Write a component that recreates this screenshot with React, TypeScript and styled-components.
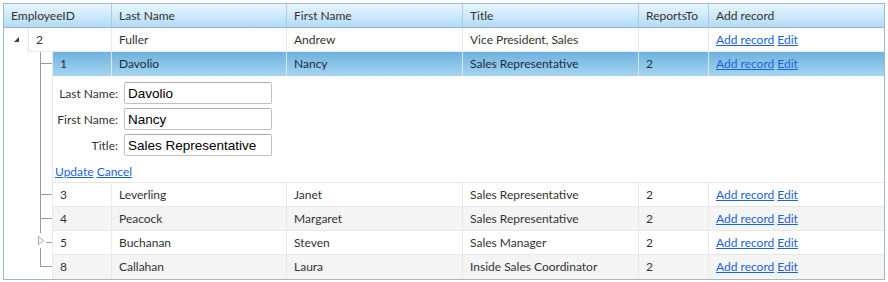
import styled, { createGlobalStyle } from "styled-components";

const GlobalStyle = createGlobalStyle`
    body {
        margin: 0;
        padding: 3px;
        background: #fff;
        font-family: Lato, "Noto Sans", sans-serif;
    }
`;

const COLS = [108, 175, 176, 176, 70, 175];
const INDENT = 24;

const Grid = styled.div`
    width: 880px;
    border: 1px solid #a0b8cc;
    font-size: 12px;
    color: #333;
`;

const HeaderRow = styled.div`
    display: flex;
    height: 24px;
    box-sizing: border-box;
    border-bottom: 1px solid #8fb4d4;
    background: linear-gradient(#e6f5fe, #cfe9fa 50%, #b1dbf5);
`;

const HeaderCell = styled.div<{ $w: number; $last?: boolean }>`
    flex: none;
    width: ${p => p.$w}px;
    box-sizing: border-box;
    padding-left: 7px;
    line-height: 23px;
    white-space: nowrap;
    border-right: ${p => (p.$last ? "none" : "1px solid #a9cde8")};
`;

const Row = styled.div`
    display: flex;
    height: 24px;
    &:last-child > div {
        border-bottom-color: transparent;
    }
`;

const Cell = styled.div<{ $w: number; $first?: boolean; $last?: boolean; $alt?: boolean; $selected?: boolean }>`
    flex: none;
    width: ${p => p.$w}px;
    box-sizing: border-box;
    padding-left: 7px;
    line-height: 23px;
    white-space: nowrap;
    overflow: hidden;
    border-bottom: 1px solid ${p => (p.$selected ? "transparent" : "#e8e8e8")};
    border-right: ${p => (p.$last ? "none" : `1px solid ${p.$selected ? "#d2eaf8" : "#e8e8e8"}`)};
    border-left: ${p => (p.$first ? "1px solid #e8e8e8" : "none")};
    background: ${p =>
        p.$selected
            ? "linear-gradient(#6db2dd, #a6d5f2)"
            : p.$alt
            ? "#f4f4f4"
            : "#fff"};
    background-origin: border-box;
    color: ${p => (p.$selected ? "#1e2c3a" : "#333")};
`;

const ToggleCell = styled.div`
    flex: none;
    width: ${INDENT}px;
    display: flex;
    align-items: center;
    justify-content: center;
    padding-bottom: 1px;
    box-sizing: border-box;
`;

const Spacer = styled.div`
    flex: none;
    width: ${INDENT}px;
`;

type LineKind = "tee" | "elbow" | "pipe";

const Connector = styled.div<{ $kind: LineKind }>`
    position: relative;
    flex: none;
    width: ${INDENT}px;
    &::before {
        content: "";
        position: absolute;
        left: 12px;
        top: 0;
        width: 1px;
        height: ${p => (p.$kind === "elbow" ? "12px" : "100%")};
        background: #9a9a9a;
    }
    &::after {
        content: "";
        display: ${p => (p.$kind === "pipe" ? "none" : "block")};
        position: absolute;
        left: 12px;
        right: 0;
        top: 11px;
        height: 1px;
        background: #9a9a9a;
    }
`;

const CollapsedToggle = styled.div`
    position: absolute;
    z-index: 1;
    left: 7px;
    top: 2px;
    width: 11px;
    height: 15px;
    background: #fff;
    display: flex;
    align-items: center;
    justify-content: center;
`;

const Link = styled.a`
    color: #1a63d3;
    text-decoration: underline;
    cursor: pointer;
`;

const FormRow = styled.div`
    display: flex;
`;

const FormPanel = styled.div`
    flex: none;
    width: ${880 - INDENT * 2}px;
    box-sizing: border-box;
    border-left: 1px solid #e8e8e8;
    border-bottom: 1px solid #e8e8e8;
    padding: 6px 0 2px 0;
`;

const FieldGrid = styled.div`
    display: grid;
    grid-template-columns: 65px 148px;
    column-gap: 6px;
    row-gap: 4px;
    align-items: center;
`;

const FieldLabel = styled.label`
    text-align: right;
    white-space: nowrap;
    color: #333;
`;

const FieldInput = styled.input`
    box-sizing: border-box;
    width: 148px;
    height: 22px;
    margin: 0;
    padding: 0 3px;
    border: 1px solid #c0c2c6;
    border-top-color: #abadb3;
    border-radius: 2px;
    font-family: "Liberation Sans", Arial, sans-serif;
    font-size: 13.5px;
    color: #000;
    outline: none;
`;

const FormActions = styled.div`
    margin-top: 8px;
    padding-left: 2px;
    line-height: 16px;
`;

type Employee = {
    id: number;
    last: string;
    first: string;
    title: string;
    reportsTo?: number;
};

const root: Employee = { id: 2, last: "Fuller", first: "Andrew", title: "Vice President, Sales" };

const children: Employee[] = [
    { id: 1, last: "Davolio", first: "Nancy", title: "Sales Representative", reportsTo: 2 },
    { id: 3, last: "Leverling", first: "Janet", title: "Sales Representative", reportsTo: 2 },
    { id: 4, last: "Peacock", first: "Margaret", title: "Sales Representative", reportsTo: 2 },
    { id: 5, last: "Buchanan", first: "Steven", title: "Sales Manager", reportsTo: 2 },
    { id: 8, last: "Callahan", first: "Laura", title: "Inside Sales Coordinator", reportsTo: 2 },
];

const headers = ["EmployeeID", "Last Name", "First Name", "Title", "ReportsTo", "Add record"];

function ExpandedIcon() {
    return (
        <svg width="5" height="5" viewBox="0 0 5 5">
            <path d="M5 0 L5 5 L0 5 Z" fill="#3a3a3a" />
        </svg>
    );
}

function CollapsedIcon() {
    return (
        <svg width="6" height="9" viewBox="0 0 6 9">
            <path d="M0.5 0.5 L5.5 4.5 L0.5 8.5 Z" fill="none" stroke="#a8a8a8" />
        </svg>
    );
}

function DataCells({ emp, depth, alt, selected }: { emp: Employee; depth: number; alt?: boolean; selected?: boolean }) {
    const values = [emp.id, emp.last, emp.first, emp.title, emp.reportsTo ?? ""];
    return (
        <>
            {values.map((v, i) => (
                <Cell
                    key={i}
                    $w={i === 0 ? COLS[0] - depth * INDENT : COLS[i]}
                    $first={i === 0}
                    $alt={alt}
                    $selected={selected}
                >
                    {v}
                </Cell>
            ))}
            <Cell $w={COLS[5]} $last $alt={alt} $selected={selected}>
                <Link>Add record</Link> <Link>Edit</Link>
            </Cell>
        </>
    );
}

function App() {
    return (
        <>
            <GlobalStyle />
            <Grid>
                <HeaderRow>
                    {headers.map((h, i) => (
                        <HeaderCell key={h} $w={COLS[i]} $last={i === headers.length - 1}>
                            {h}
                        </HeaderCell>
                    ))}
                </HeaderRow>
                <Row>
                    <ToggleCell>
                        <ExpandedIcon />
                    </ToggleCell>
                    <DataCells emp={root} depth={1} />
                </Row>
                {children.map((emp, idx) => {
                    const isLast = idx === children.length - 1;
                    const rows = [
                        <Row key={emp.id}>
                            <Spacer />
                            <Connector $kind={isLast ? "elbow" : "tee"}>
                                {emp.id === 5 && (
                                    <CollapsedToggle>
                                        <CollapsedIcon />
                                    </CollapsedToggle>
                                )}
                            </Connector>
                            <DataCells emp={emp} depth={2} selected={idx === 0} alt={idx === 2 || idx === 4} />
                        </Row>,
                    ];
                    if (idx === 0) {
                        rows.push(
                            <FormRow key="edit">
                                <Spacer />
                                <Connector $kind="pipe" />
                                <FormPanel>
                                    <FieldGrid>
                                        <FieldLabel>Last Name:</FieldLabel>
                                        <FieldInput defaultValue={emp.last} />
                                        <FieldLabel>First Name:</FieldLabel>
                                        <FieldInput defaultValue={emp.first} />
                                        <FieldLabel>Title:</FieldLabel>
                                        <FieldInput defaultValue={emp.title} />
                                    </FieldGrid>
                                    <FormActions>
                                        <Link>Update</Link> <Link>Cancel</Link>
                                    </FormActions>
                                </FormPanel>
                            </FormRow>
                        );
                    }
                    return rows;
                })}
            </Grid>
        </>
    );
}

export default App;
